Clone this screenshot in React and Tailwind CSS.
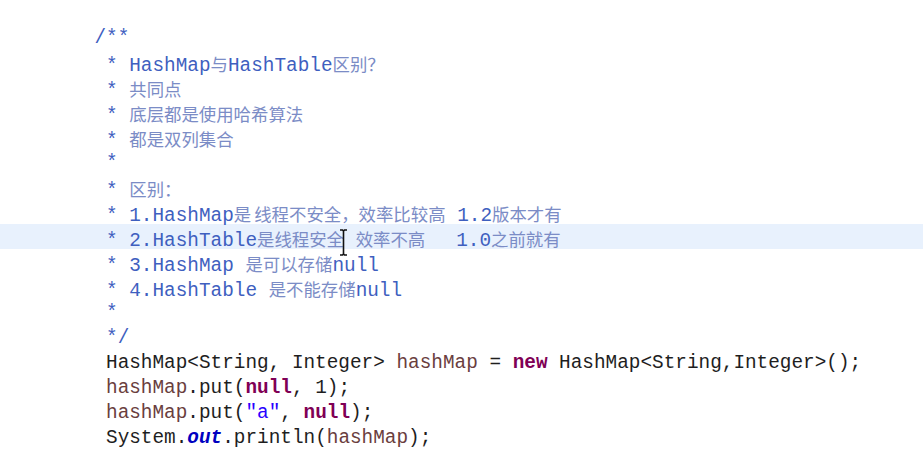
import React from "react";

const Z = ({ children, className = "" }) => (
  <span className={"font-['Noto_Sans_CJK_SC',sans-serif] text-[17.4px] text-[#7b8cc6] " + className}>{children}</span>
);
const C = ({ children }) => <span className="text-[#3f5fbf]">{children}</span>;
const K = ({ children }) => <span className="font-bold text-[#7f0055]">{children}</span>;
const V = ({ children }) => <span className="text-[#6a3e3e]">{children}</span>;

const Row = ({ children, hl = false }) => (
  <div className={"h-[25px] leading-[29px] whitespace-pre pl-[94.4px] " + (hl ? "bg-[#e8f1fd]" : "")}>
    {children}
  </div>
);

export default function App() {
  return (
    <div className="w-[923px] h-[459px] bg-white overflow-hidden pt-[24px] font-['Liberation_Mono',monospace] text-[19.38px] text-[#1e1e1e]">
      <Row><C>/**</C></Row>
      <Row><C> * HashMap</C><Z>与</Z><C>HashTable</C><Z>区别？</Z></Row>
      <Row><C> * </C><Z>共同点</Z></Row>
      <Row><C> * </C><Z>底层都是使用哈希算法</Z></Row>
      <Row><C> * </C><Z>都是双列集合</Z></Row>
      <Row><C> *</C></Row>
      <Row><C> * </C><Z>区别：</Z></Row>
      <Row><C> * 1.HashMap</C><Z className="mr-[3px]">是</Z><Z>线程不安全，效率比较高</Z><C> 1.2</C><Z>版本才有</Z></Row>
      <Row hl>
        <C> * 2.HashTable</C>
        <span className="relative">
          <Z>是线程安全</Z>
          <svg className="absolute right-[-4px] top-[-1px]" width="9" height="27" viewBox="0 0 9 27">
            <path d="M1 1h2.5l1 1 1-1H8M4.5 2v23M1 26h2.5l1-1 1 1H8" stroke="#111" strokeWidth="1.6" fill="none" />
          </svg>
        </span>
        <C> </C><Z>效率不高</Z><span className="inline-block w-[31px]"></span><C>1.0</C><Z>之前就有</Z>
      </Row>
      <Row><C> * 3.HashMap </C><Z>是可以存储</Z><C>null</C></Row>
      <Row><C> * 4.HashTable </C><Z>是不能存储</Z><C>null</C></Row>
      <Row><C> *</C></Row>
      <Row><C> */</C></Row>
      <Row> HashMap&lt;String, Integer&gt; <V>hashMap</V> = <K>new</K> HashMap&lt;String,Integer&gt;();</Row>
      <Row> <V>hashMap</V>.put(<K>null</K>, 1);</Row>
      <Row> <V>hashMap</V>.put(<span className="text-[#2a00ff]">"a"</span>, <K>null</K>);</Row>
      <Row> System.<span className="font-bold italic text-[#0000c0]">out</span>.println(<V>hashMap</V>);</Row>
    </div>
  );
}
